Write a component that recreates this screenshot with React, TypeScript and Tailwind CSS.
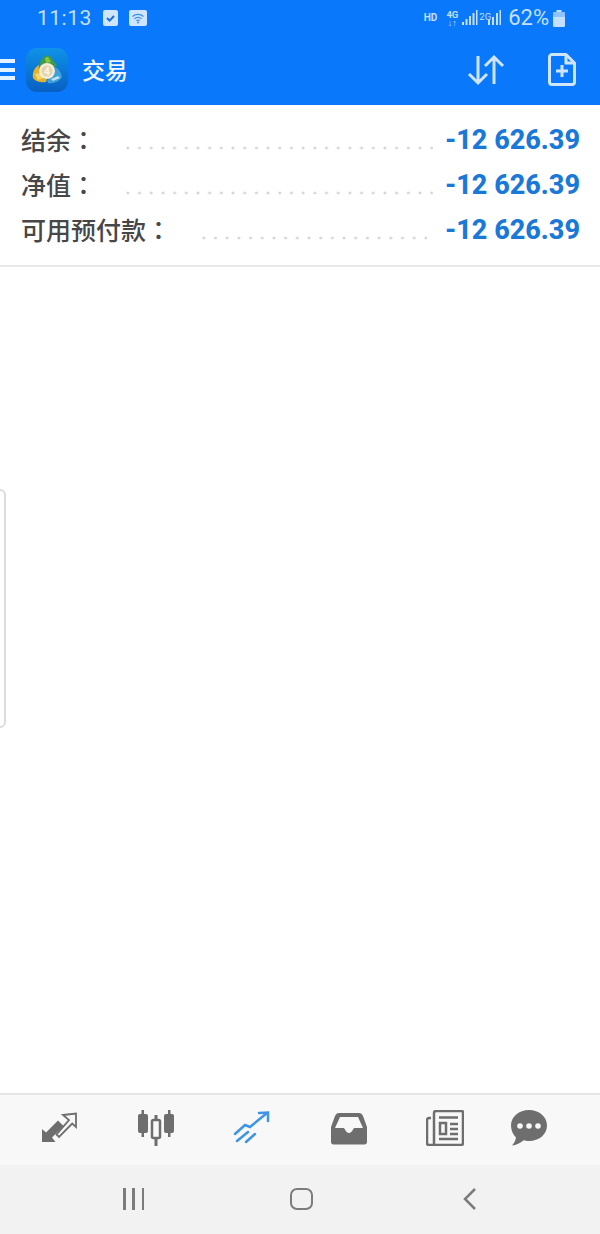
const CJK = "font-['Noto_Sans_CJK_SC','Noto_Sans_CJK_TC',sans-serif]";

const rows = [
  { label: "结余", dots: "w-[311px] mr-[12px]" },
  { label: "净值", dots: "w-[311px] mr-[12px]" },
  { label: "可用预付款", dots: "w-[229px] mr-[18px]" },
];

function StatusBar() {
  return (
    <div className="flex h-[36px] items-center justify-between pl-[37px] pr-[35px] text-[#c4e0fe]">
      <div className="flex items-center">
        <span className="font-['Roboto',sans-serif] text-[21px] leading-none tracking-[0.5px]">11:13</span>
        <svg className="ml-[11px]" width="15" height="16" viewBox="0 0 15 16">
          <rect width="15" height="16" rx="2" fill="#cfe5fe" />
          <path d="M4 8l2.600 2.600L11 6" fill="none" stroke="#1a6fd8" strokeWidth="2" />
        </svg>
        <svg className="ml-[11px]" width="18" height="16" viewBox="0 0 18 16">
          <rect width="18" height="16" rx="2" fill="#cfe5fe" />
          <path d="M3.500 6.500a8 8 0 0111 0M5.500 8.800a5 5 0 017 0M7.400 10.800a2.400 2.400 0 013.200 0" fill="none" stroke="#3b8fe8" strokeWidth="1.200" />
          <circle cx="9" cy="12.600" r="1" fill="#3b8fe8" />
        </svg>
      </div>
      <div className="flex items-center">
        <span className="font-['Roboto',sans-serif] text-[10px] font-bold leading-none">HD</span>
        <div className="ml-[8px] flex w-[14px] flex-col items-center font-['Roboto',sans-serif] text-[9.500px] font-bold leading-[9px]">
          <span>4G</span>
          <span className="text-[9px] leading-[8px]">↓↑</span>
        </div>
        <svg className="ml-[3px]" width="16" height="16" viewBox="0 0 16 16" fill="#c4e0fe">
          <rect x="0" y="12" width="2" height="3" />
          <rect x="3.500" y="9" width="2" height="6" />
          <rect x="7" y="6" width="2" height="9" />
          <rect x="10.500" y="3" width="2" height="12" />
          <rect x="14" y="0" width="1.500" height="15" />
        </svg>
        <span className="ml-[1px] -mt-[3px] font-['Roboto',sans-serif] text-[9.500px] leading-none">2G</span>
        <svg className="ml-[-3px]" width="13" height="16" viewBox="0 0 13 16" fill="#c4e0fe">
          <rect x="0" y="10" width="2" height="5" />
          <rect x="4" y="7" width="2" height="8" />
          <rect x="8" y="3" width="2" height="12" />
          <rect x="11.500" y="0" width="1.500" height="15" />
        </svg>
        <span className="ml-[7px] font-['Roboto',sans-serif] text-[22px] leading-none">62%</span>
        <svg className="ml-[4px]" width="12" height="17" viewBox="0 0 12 17">
          <rect x="3.500" y="0" width="5" height="2" fill="#c4e0fe" />
          <rect x="0" y="2" width="12" height="15" rx="1.500" fill="#c4e0fe" />
          <rect x="0" y="2" width="12" height="5" rx="1.500" fill="#8fc3fb" />
        </svg>
      </div>
    </div>
  );
}

function Logo() {
  return (
    <div className="flex h-[44px] w-[42px] items-center justify-center rounded-[11px] bg-gradient-to-b from-[#0f93e8] to-[#0a5fc2]">
      <svg width="30" height="32" viewBox="0 0 30 32">
        <path d="M15 1l4 2 6 9-4 2c-2-3-7-4-11-2L7 14c0-6 3-11 8-13z" fill="#3f9a4a" />
        <path d="M13 4l3-1 3 5-5 1z" fill="#8cc63f" />
        <path d="M7 11C3 13 0 18 1 24c3 4 8 5 13 4l1-3c-5 0-9-5-8-14z" fill="#e3b52c" />
        <path d="M3 20l5-1 3 5-5 2z" fill="#f4d768" />
        <path d="M23 13c1 6-3 11-8 13l1 3c5 1 11-1 14-6-1-5-3-8-7-10z" fill="#3d9fdc" />
        <path d="M19 25l7-3 2 2-7 3z" fill="#bfe3f7" />
        <circle cx="15" cy="17" r="8" fill="#f5edd8" />
        <circle cx="15" cy="17" r="5.500" fill="#e2d3ac" />
        <text x="15" y="21" textAnchor="middle" fontSize="11" fontWeight="700" fill="#f8f4e8" fontFamily="Roboto, sans-serif">4</text>
      </svg>
    </div>
  );
}

function TopBar() {
  return (
    <div className="flex h-[69px] items-center pb-[2px]">
      <div className="flex h-[21px] w-[15px] flex-col justify-between">
        <div className="h-[4px] bg-[#e4f1ff]" />
        <div className="h-[4px] bg-[#e4f1ff]" />
        <div className="h-[4px] bg-[#e4f1ff]" />
      </div>
      <div className="ml-[11px]">
        <Logo />
      </div>
      <span className={`ml-[14px] text-[23px] font-medium leading-none text-[#eef6ff] ${CJK}`}>交易</span>
      <svg className="ml-auto" width="38" height="32" viewBox="0 0 38 32" fill="none" stroke="#cfe5fe" strokeWidth="3">
        <path d="M11 2v27M2 20l9 9 9-9" />
        <path d="M27 30V3M18 12l9-9 9 9" />
      </svg>
      <svg className="ml-[43px] mr-[24px]" width="28" height="33" viewBox="0 0 28 33" fill="none" stroke="#cfe5fe" strokeWidth="3">
        <path d="M4 1.500h14l8.500 8.500v19a2.500 2.500 0 01-2.500 2.500H4a2.500 2.500 0 01-2.500-2.500V4A2.500 2.500 0 014 1.500z" strokeLinejoin="round" />
        <path d="M18 1.500V10h8.500" />
        <path d="M14 12v12M8 18h12" />
      </svg>
    </div>
  );
}

function Summary() {
  return (
    <div className="flex h-[162px] flex-col border-b-2 border-[#e8e8e8] bg-white pl-[21px] pr-[20px] pt-[13px]">
      {rows.map((row) => (
        <div key={row.label} className="flex h-[45px] items-center justify-between">
          <span className={`pb-[3px] text-[25px] font-medium leading-none text-[#474747] ${CJK}`}>
            {row.label}
            <span className="font-['Noto_Sans_CJK_TC',sans-serif]">：</span>
          </span>
          <div className="flex items-center">
            <div
              className={`mt-[15px] h-[4px] ${row.dots} bg-[radial-gradient(circle,#d6d6d6_1.300px,transparent_1.700px)] bg-[length:11.700px_4px]`}
            />
            <span className="font-['Roboto',sans-serif] text-[27px] font-extrabold leading-none text-[#1a78d8]">
              -12 626.39
            </span>
          </div>
        </div>
      ))}
    </div>
  );
}

function TransferIcon() {
  return (
    <svg width="38" height="32" viewBox="0 0 38 32">
      <path d="M2 30V17l4 3.500L18 8.500l5.500 5.500L12 25.500l3.500 4.500z" fill="#6e6e6e" />
      <path d="M23 3l13-1.500V15l-3.800-3.500L19 25l-2.500-2.500L29 8z" fill="none" stroke="#6e6e6e" strokeWidth="1.800" />
    </svg>
  );
}

function CandlesIcon() {
  return (
    <svg width="38" height="36" viewBox="0 0 38 36" fill="#6e6e6e">
      <rect x="4.500" y="0" width="2.500" height="27" />
      <rect x="1" y="4" width="10" height="19" rx="2" />
      <rect x="31" y="0" width="2.500" height="27" />
      <rect x="27" y="4" width="10" height="19" rx="2" />
      <rect x="17.500" y="5" width="3" height="31" />
      <rect x="15" y="10" width="8" height="18" rx="1.500" fill="#f8f8f8" stroke="#6e6e6e" strokeWidth="2.500" />
    </svg>
  );
}

function TradeIcon() {
  return (
    <svg width="38" height="34" viewBox="0 0 38 34" fill="none" stroke="#3f94e4" strokeWidth="2.500" strokeLinecap="round">
      <path d="M2 23l10-9 5 2L34 2" />
      <path d="M26 2l9-.5V10" />
      <path d="M4 30l11-9M13 31l9-8" />
    </svg>
  );
}

function InboxIcon() {
  return (
    <svg width="36" height="33" viewBox="0 0 36 33">
      <path
        d="M8 1h20c2 0 3 1 4 3l4 11v15c0 1.500-1 2.500-2.500 2.500h-31C1 32.500 0 31.500 0 30V15L4 4c1-2 2-3 4-3z"
        fill="#6e6e6e"
      />
      <path d="M9 5h18l5 11h-8c-1 0-1.500.5-2 1.500-1 2-2.500 3.500-4 3.500s-3-1.500-4-3.500C13.500 16.500 13 16 12 16H4z" fill="#f8f8f8" />
    </svg>
  );
}

function NewsIcon() {
  return (
    <svg width="38" height="36" viewBox="0 0 38 36" fill="none" stroke="#6e6e6e">
      <path d="M5 8H3a2 2 0 00-2 2v23a2 2 0 002 2h32a2 2 0 002-2V2a1 1 0 00-1-1H10a2 2 0 00-2 2v31" strokeWidth="2.500" />
      <path d="M13 7.500h19" strokeWidth="2.500" />
      <rect x="14" y="13" width="6" height="11" strokeWidth="2.500" />
      <path d="M24 14h8M24 19h8M24 24h8M13 29h19" strokeWidth="2.500" />
    </svg>
  );
}

function ChatIcon() {
  return (
    <svg width="36" height="36" viewBox="0 0 36 36">
      <path d="M18 0c10 0 18 6.500 18 15.500S28 31 18 31c-2 0-4-.3-5.500-.8C9.500 33 5 35 1 35.500c2-2 3.500-5 4-8C2 24.500 0 20.500 0 15.500 0 6.500 8 0 18 0z" fill="#6e6e6e" />
      <circle cx="9" cy="16" r="2.800" fill="#f8f8f8" />
      <circle cx="18" cy="16" r="2.800" fill="#f8f8f8" />
      <circle cx="27" cy="16" r="2.800" fill="#f8f8f8" />
    </svg>
  );
}

function BottomNav() {
  const icons = [TransferIcon, CandlesIcon, TradeIcon, InboxIcon, NewsIcon];
  return (
    <div className="flex h-[72px] items-start border-t-2 border-[#e6e6e6] bg-[#f8f8f8] pl-[11px] pt-[14px]">
      {icons.map((Icon, i) => (
        <div key={i} className="flex h-[38px] w-[96.500px] items-center justify-center">
          <Icon />
        </div>
      ))}
      <div className="ml-[-13px] flex h-[38px] w-[96px] items-center justify-center">
        <ChatIcon />
      </div>
    </div>
  );
}

function SystemBar() {
  return (
    <div className="relative flex h-[69px] items-start bg-[#f2f2f2] pt-[23px]">
      <div className="ml-[123px] flex h-[22px] w-[21px] justify-between">
        <div className="w-[2.500px] bg-[#7c7c7c]" />
        <div className="w-[2.500px] bg-[#7c7c7c]" />
        <div className="w-[2.500px] bg-[#7c7c7c]" />
      </div>
      <div className="ml-[146px] h-[22px] w-[23px] rounded-[7px] border-[2.500px] border-[#7c7c7c]" />
      <svg className="ml-[150px]" width="14" height="22" viewBox="0 0 14 22" fill="none" stroke="#7c7c7c" strokeWidth="2.500">
        <path d="M12 1L2 11l10 10" />
      </svg>
    </div>
  );
}

export default function App() {
  return (
    <div className="relative flex h-[1234px] w-[600px] flex-col overflow-hidden bg-white">
      <div className="h-[105px] bg-[#0a78fa]">
        <StatusBar />
        <TopBar />
      </div>
      <Summary />
      <div className="flex-1 bg-white" />
      {/* edge tab, sticks out from the left side */}
      <div className="absolute left-[-10px] top-[489px] h-[239px] w-[16px] rounded-[6px] border-2 border-[#dcdcdc] bg-white" />
      <BottomNav />
      <SystemBar />
    </div>
  );
}
